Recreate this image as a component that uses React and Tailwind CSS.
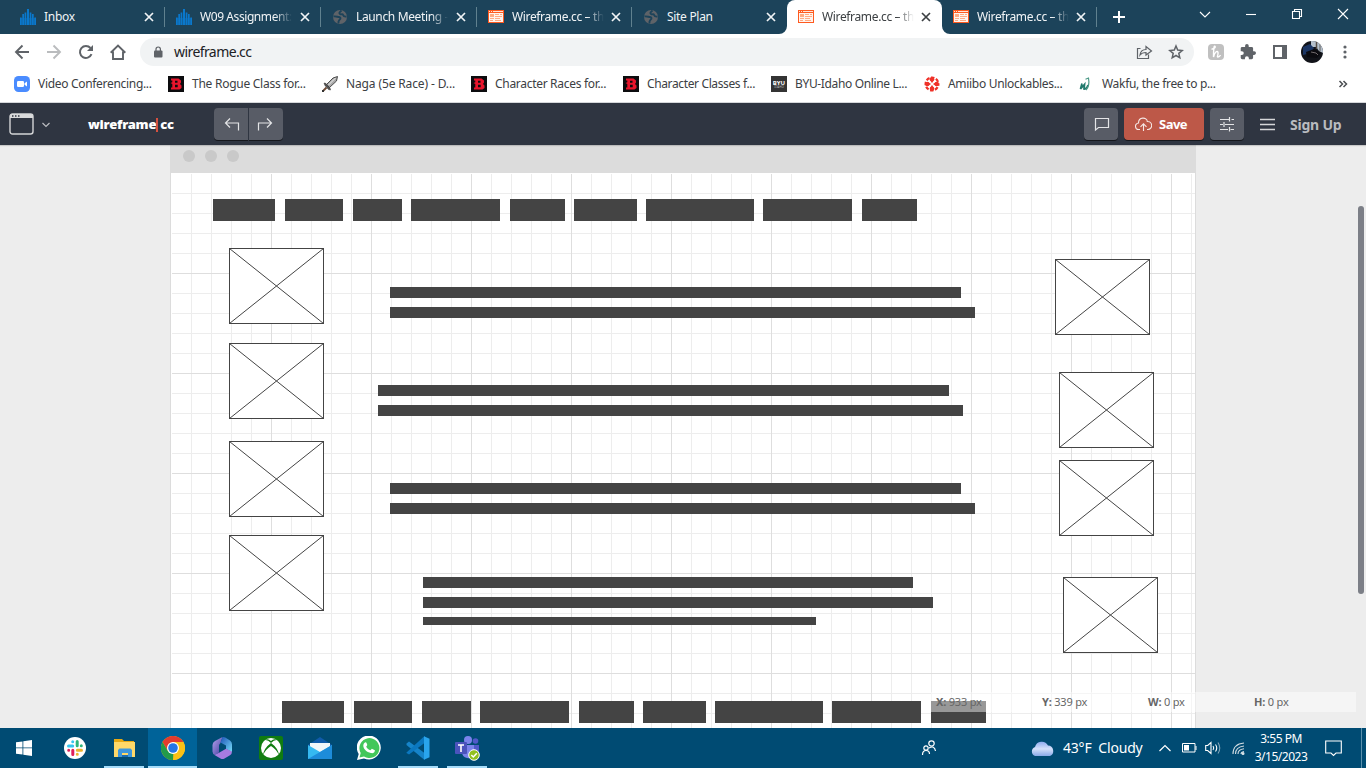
import React from 'react';

/* ---------- favicons ---------- */
const CanvasIcon = () => (
  <svg width="16" height="16" viewBox="0 0 16 16" fill="#0a78cc">
    <path d="M0 8.500h1.700V16H0zM2.300 5h1.700v11H2.300zM4.600 3.500h1.700V16H4.600zM7 0h2v16H7zM9.700 3.500h1.700V16H9.700zM12 5h1.700v11H12zM14.300 8.500H16V16h-1.700z" />
    <path d="M0 9h16v7H0z" opacity=".45" />
  </svg>
);
const GlobeIcon = () => (
  <svg width="16" height="16" viewBox="0 0 16 16">
    <circle cx="8" cy="8" r="7" fill="#5f6368" />
    <path d="M1.500 7.500C4 7 5.500 8 7 8s2 1.500.8 2.500C7 11.500 6 12 6.500 14.500M9.500 1.500C8 3 6.500 4 8 5s2.500-.5 3 .8 1 2.200 3.500 1.700" stroke="#1c435a" strokeWidth="1.900" fill="none" />
  </svg>
);
const WireIcon = () => (
  <svg width="16" height="16" viewBox="0 0 16 16" shapeRendering="crispEdges">
    <rect y="1" width="16" height="13" fill="#ff5a1f" />
    <rect x="1" y="4" width="14" height="9" fill="#fff4ee" />
    <path d="M1 2h1v1H1zM3 2h1v1H3zM5 2h10v1H5z" fill="#ffe5d8" />
    <path d="M2 5h4v3H2zM7 5h4v1H7zM12 5h2v1h-2zM7 7h7v1H7zM2 9h4v1H2zM7 9h5v1H7zM2 11h3v1H2zM7 11h6v1H7z" fill="#ffab84" />
  </svg>
);
const icons = { canvas: CanvasIcon, globe: GlobeIcon, wire: WireIcon };

const Cross = () => (
  <svg width="10" height="10" viewBox="0 0 10 10" stroke="currentColor" strokeWidth="1.700"><path d="M1 1l8 8M9 1L1 9" /></svg>
);

const Tab = ({ icon, title, active, width, sep, gradient, tracking, gap = 'ml-2' }) => {
  const Icon = icons[icon];
  return (
    <div className={`relative flex h-[34px] shrink-0 items-center pl-[11px] ${width} ${active ? 'rounded-t-lg bg-white text-[#3c4043]' : 'text-[#f1f4f6]'}`}>
      {active && (
        <>
          <svg className="absolute bottom-0 -left-2" width="8" height="8"><path d="M8 0v8H0a8 8 0 0 0 8-8" fill="white" /></svg>
          <svg className="absolute -right-2 bottom-0" width="8" height="8"><path d="M0 0v8h8a8 8 0 0 1-8-8" fill="white" /></svg>
        </>
      )}
      <Icon />
      <div className={`ml-2 w-[92px] overflow-hidden text-[12px] whitespace-nowrap ${tracking} ${gradient ? '[mask-image:linear-gradient(to_right,black_75px,transparent_92px)]' : ''}`}>{title}</div>
      <div className={gap}><Cross /></div>
      {sep && <div className="absolute top-[7px] right-0 h-5 w-px bg-[#60818f]" />}
    </div>
  );
};

const Tabs = () => (
  <div className="flex h-[34px] w-full bg-[#1c435a] pl-[9px]">
    <Tab icon="canvas" title="Inbox" width="w-[156px]" sep tracking="tracking-[-0.3px]" />
    <Tab icon="canvas" title="W09 Assignment:" width="w-[156px]" sep gradient tracking="tracking-[-0.42px]" />
    <Tab icon="globe" title="Launch Meeting -" width="w-[156px]" sep gradient tracking="tracking-[-0.36px]" />
    <Tab icon="wire" title="Wireframe.cc – th" width="w-[155px]" sep gradient tracking="tracking-[-0.35px]" gap="ml-[7px]" />
    <Tab icon="globe" title="Site Plan" width="w-[155px]" tracking="tracking-[-0.3px]" gap="ml-[7px]" />
    <Tab icon="wire" title="Wireframe.cc – th" width="w-[155px]" active gradient tracking="tracking-[-0.35px]" gap="ml-[7px]" />
    <Tab icon="wire" title="Wireframe.cc – th" width="w-[155px]" sep gradient tracking="tracking-[-0.35px]" gap="ml-[7px]" />
    <svg className="mt-[11px] ml-4" width="12" height="12" stroke="#fff" strokeWidth="2"><path d="M6 0v12M0 6h12" /></svg>
    <div className="ml-auto flex h-7 text-white">
      {[
        <path key="a" d="M3 6l5 5 5-5" />,
        <path key="b" d="M3 8.500h10" />,
        <path key="c" d="M3.500 5.500h7v7h-7zM5.500 5.500v-2h7v7h-2" />,
        <path key="d" d="M3 3l10 10M13 3L3 13" />,
      ].map((p, i) => (
        <div key={i} className="flex w-[46px] items-center justify-center">
          <svg width="16" height="16" fill="none" stroke="#fff" strokeWidth="1.100">{p}</svg>
        </div>
      ))}
    </div>
  </div>
);

const Toolbar = () => (
  <div className="flex h-9 items-center bg-white text-[#5f6368]">
    <svg className="ml-[14px]" width="16" height="16" fill="none" stroke="#5f6368" strokeWidth="1.900"><path d="M15 8H2M8.500 1.500L2 8l6.500 6.500" /></svg>
    <svg className="ml-4" width="16" height="16" fill="none" stroke="#babcbe" strokeWidth="1.900"><path d="M1 8h13M7.500 1.500L14 8l-6.500 6.500" /></svg>
    <svg className="ml-4" width="16" height="16" fill="none" stroke="#5f6368" strokeWidth="2"><path d="M13.500 10.200A6 6 0 1 1 12.500 4" /><path d="M15 1v6H9z" fill="#5f6368" stroke="none" /></svg>
    <svg className="ml-4" width="16" height="16" fill="none" stroke="#5f6368" strokeWidth="1.900"><path d="M.7 8.700L8 1.500l7.300 7.200M3 7.500V15h3.500v0h3.500H13V7.500" /></svg>
    <div className="ml-[14px] flex h-7 w-[1054px] items-center rounded-full bg-[#f1f3f4] pr-[10px] pl-[14px]">
      <svg width="9" height="12" viewBox="0 0 9 12"><rect y="4.500" width="8.500" height="7" rx="1" fill="#5f6368" /><path d="M2 5V3.200a2.200 2.200 0 0 1 4.400 0V5" fill="none" stroke="#5f6368" strokeWidth="1.200" /></svg>
      <span className="ml-[11px] pb-px text-[14px] tracking-[-0.58px] text-[#202124]">wireframe.cc</span>
      <svg className="mr-[15px] ml-auto" width="17" height="16" fill="none" stroke="#5f6368" strokeWidth="1.200"><path d="M4.500 4.500h-3v10h11v-4M4 11c.5-4 3-5.500 6-5.500V2.500L15.500 7 10 11V8.500C7.500 8.500 5.500 9 4 11z" /></svg>
      <svg width="16" height="16" viewBox="0 0 16 16" fill="none" stroke="#5f6368" strokeWidth="1.500"><path d="M8 2l1.700 4.100 4.500.4-3.400 2.900 1 4.400L8 11.500l-3.800 2.300 1-4.400L1.800 6.500l4.500-.4z" /></svg>
    </div>
    <div className="ml-[14px] flex h-4 w-4 items-center justify-center rounded-sm bg-[#c0c0c0]">
      <svg width="12" height="14" fill="none" stroke="#fff" strokeWidth="1.400"><path d="M1.500 4C4 4.500 6 2 5 1.200S3.500 4 3.500 12C4.500 7 7.500 5 8 7.500S6.500 12 8 12s2-1 2.500-2" /></svg>
    </div>
    <svg className="ml-4" width="16" height="16" viewBox="1 1 22 22" fill="#5f6368"><path d="M20.500 11H19V7a2 2 0 0 0-2-2h-4V3.500a2.500 2.500 0 0 0-5 0V5H4a2 2 0 0 0-2 2v3.800h1.500a2.700 2.700 0 0 1 0 5.400H2V20a2 2 0 0 0 2 2h3.800v-1.500a2.700 2.700 0 0 1 5.400 0V22H17a2 2 0 0 0 2-2v-4h1.500a2.500 2.500 0 0 0 0-5z" /></svg>
    <svg className="ml-[17px]" width="14" height="14" shapeRendering="crispEdges"><path d="M0 0h14v14H0zM2 2v10h7V2z" fill="#5f6368" fillRule="evenodd" /></svg>
    <svg className="ml-[14px]" width="22" height="22" viewBox="0 0 22 22">
      <defs><clipPath id="av"><circle cx="11" cy="11" r="11" /></clipPath></defs>
      <g clipPath="url(#av)">
        <rect width="22" height="22" fill="#111319" />
        <path d="M10 0h12v12l-4-2-3-4-5 0z" fill="#b5c0cc" /><path d="M15.500 0v8" stroke="#554c45" strokeWidth="1.500" /><path d="M19 1v9" stroke="#8b8f93" strokeWidth="2" />
        <path d="M2 6l7-3 4 4-3 5-8 2z" fill="#1b3563" /><path d="M5 11l8-3 7 4-4 5-10-1z" fill="#0b0b10" /><path d="M10 11l5 1 2 2" stroke="#706a6c" fill="none" />
      </g>
    </svg>
    <svg className="ml-[20px]" width="4" height="14" fill="#5f6368"><circle cx="2" cy="2" r="1.600" /><circle cx="2" cy="7" r="1.600" /><circle cx="2" cy="12" r="1.600" /></svg>
  </div>
);

/* ---------- bookmarks ---------- */
const ZoomIcon = () => <svg width="16" height="16"><rect width="16" height="16" rx="4.500" fill="#4a8cff" /><rect x="3" y="5" width="7" height="6" rx="1.200" fill="#fff" /><path d="M10.500 7.300L13 5.500v5l-2.500-1.800z" fill="#fff" /></svg>;
const BIcon = () => (
  <svg width="16" height="16"><rect width="16" height="16" fill="#0c0c0e" /><path d="M3 2.500h7.500L13 4.500v2L12 8l1.500 1.500V12l-2 1.500H3v-2h1.300V8L2.500 7l1.800-.8V4.500H3zM7 4.700v2h2.500v-2zM7 8.800v2.500h2.700V8.800z" fill="#e8152c" fillRule="evenodd" /></svg>
);
const SwordIcon = () => (
  <svg width="16" height="16"><path d="M15.500.5L14.500 5 7.500 11.500 4.500 8.500 11 2z" fill="#aaa" stroke="#3d3d3d" strokeWidth=".9" /><path d="M13.500 2L6 9.500" stroke="#eee" /><path d="M2 7l2 .5 4 4.500.5 2-2-.5L3 9.500z" fill="#555" stroke="#292929" strokeWidth=".5" /><path d="M4.500 11.500l-3 3" stroke="#704c38" strokeWidth="2" /><path d="M0 14h2v2H0z" fill="#333" /></svg>
);
const ByuIcon = () => (
  <div className="flex h-4 w-4 flex-col items-center justify-center bg-[#343434] leading-none text-white">
    <span className="text-[6px] leading-[6px] font-bold">BYU</span><span className="text-[3px] leading-[3px] text-[#bbb]">IDAHO</span>
  </div>
);
const IgnIcon = () => (
  <svg width="16" height="16" viewBox="0 0 16 16" fill="#ef3128">
    <circle cx="8" cy="8" r="6.400" fill="none" stroke="#ef3128" strokeWidth="2.200" strokeDasharray="3.400 1.627" strokeDashoffset="-3.300" />
    <circle cx="8" cy="3.300" r="2.300" /><circle cx="8" cy="12.700" r="2.300" /><circle cx="3.300" cy="8" r="2.300" /><circle cx="12.700" cy="8" r="2.300" />
    <path d="M6.500 4.500h3L8 7.200zM6.500 11.500h3L8 8.800zM4.500 6.500v3L7.200 8zM11.500 6.500v3L8.800 8z" />
  </svg>
);
const WakfuIcon = () => (
  <svg width="16" height="16" fill="none" stroke="#21796c"><path d="M4 7.500L2.500 13 6.500 8.500 6 13c2 .5 3.500-2 4-4" strokeWidth="1.800" /><path d="M7.500 3.200l3-1.200c.8 4.500.5 9-2.500 12" strokeWidth="1.200" stroke="#4e9a88" /></svg>
);
const bookmarks = [
  [ZoomIcon, 'Video Conferencing...', 'w-[154px]', 'tracking-[-0.31px]'],
  [BIcon, 'The Rogue Class for...', 'w-[154px]', 'tracking-[-0.26px]'],
  [SwordIcon, 'Naga (5e Race) - D...', 'w-[149px]', 'tracking-[-0.13px]'],
  [BIcon, 'Character Races for...', 'w-[152px]', 'tracking-[-0.3px]'],
  [BIcon, 'Character Classes f...', 'w-[148px]', 'tracking-[-0.37px]'],
  [ByuIcon, 'BYU-Idaho Online L...', 'w-[153px]', 'tracking-[-0.35px]'],
  [IgnIcon, 'Amiibo Unlockables...', 'w-[154px]', 'tracking-[-0.31px]'],
  [WakfuIcon, 'Wakfu, the free to p...', 'w-[154px]', 'tracking-[-0.31px]'],
];
const Bookmarks = () => (
  <div className="flex h-[33px] items-center border-b border-[#d5d7da] bg-white pr-[18px] pb-[4px] pl-[14px] text-[12px] text-[#3c4043]">
    {bookmarks.map(([Icon, label, w, tr]) => (
      <div key={label} className={`flex shrink-0 items-center gap-2 ${w}`}>
        <Icon /><span className={`whitespace-nowrap ${tr}`}>{label}</span>
      </div>
    ))}
    <svg className="ml-auto" width="10" height="8" fill="none" stroke="#4c4f53" strokeWidth="1.500"><path d="M1.500 1l3 3-3 3M5.500 1l3 3-3 3" /></svg>
  </div>
);

/* ---------- wireframe.cc header ---------- */
const btn = 'flex h-8 items-center justify-center bg-[#585c66] shadow-[0_1px_0_#15171c]';
const AppHeader = () => (
  <div className="relative z-10 flex h-[42px] items-center bg-[#2f3541] shadow-[0_1px_1px_rgba(0,0,0,0.15)]">
    <svg className="ml-[9px]" width="25" height="22" fill="none"><rect x="1" y="1" width="23" height="20" rx="2.500" stroke="#d4d5d6" strokeWidth="1.400" /><path d="M1 5V3a2 2 0 0 1 2-2h19a2 2 0 0 1 2 2v2z" fill="#d9dadb" /><path d="M3 3h1.500M6 3h1.500M9 3h1.500" stroke="#2f3541" strokeWidth="1.500" /></svg>
    <svg className="mt-[2px] ml-[8px]" width="8" height="6" fill="none" stroke="#bbbdc1" strokeWidth="1.200"><path d="M.5 1L4 4.500 7.500 1" /></svg>
    <div className="mt-px ml-[38px] flex w-[88px] items-center text-[13px] font-black tracking-[-0.23px] text-white">wireframe<span className="mr-[2px] h-[14px] w-[2px] bg-[#d4503f]" />cc</div>
    <div className="ml-[38px] flex gap-px">
      <div className={`${btn} w-[34px] rounded-l`}><svg className="ml-[2px]" width="16" height="16" fill="none" stroke="#e3e4e6" strokeWidth="1.200"><path d="M6 2.500L1.500 7 6 11.500M1.500 7h13v7.500" /></svg></div>
      <div className={`${btn} w-[34px] rounded-r`}><svg className="mr-[2px]" width="16" height="16" fill="none" stroke="#e3e4e6" strokeWidth="1.200"><path d="M10 2.500L14.500 7 10 11.500M14.500 7h-13v7.500" /></svg></div>
    </div>
    <div className="ml-auto flex items-center gap-1.5 pr-[24px]">
      <div className={`${btn} w-[34px] rounded`}><svg className="ml-[2px]" width="16" height="16" fill="none" stroke="#e3e4e6" strokeWidth="1.200"><path d="M1.500 2.500h13v9h-10l-3 2.500z" /></svg></div>
      <div className="flex h-8 w-20 items-center rounded bg-[#bd5848] pl-[11px] text-[13px] font-bold tracking-[-0.5px] text-white shadow-[0_1px_0_#15171c]">
        <svg className="mr-[7px]" width="17" height="14" fill="none" stroke="#f5e8e6" strokeWidth="1.100"><path d="M5 12.500H4A3.200 3.200 0 0 1 3.500 6C3.500-.5 12 0 12.300 4.500A4 4 0 0 1 13 12.500h-1M8.500 14V7M5.500 9.800l3-3 3 3" /></svg>
        <span className="mt-px">Save</span>
      </div>
      <div className={`${btn} w-[34px] rounded`}><svg width="16" height="16" fill="none" stroke="#e3e4e6" strokeWidth="1.200"><path d="M1 3.500h9M12.500 3.500H15M1 8.500h3M6 8.500h9M1 13.500h8M11.500 13.500H15M10.500 1v4.500M5 6v5M10.500 11v4.500" /></svg></div>
      <svg className="ml-[10px]" width="15" height="13" stroke="#d6d7d9" strokeWidth="1.300"><path d="M0 1.500h15M0 6.500h15M0 11.500h15" /></svg>
      <span className="ml-[9px] w-[52px] text-[14px] font-bold tracking-[-0.22px] whitespace-nowrap text-[#b9bbbf]">Sign Up</span>
    </div>
  </div>
);

/* ---------- drawing surface ---------- */
const Img = ({ x, y }) => (
  <svg className="absolute" style={{ left: x, top: y }} width="95" height="76"><rect x=".5" y=".5" width="94" height="75" fill="#fff" stroke="#444" /><path d="M.5.5l94 75M94.500.5l-94 75" stroke="#444" strokeWidth="1" /></svg>
);
const Bar = ({ x, y, w, h }) => <div className="absolute bg-[#444]" style={{ left: x, top: y, width: w, height: h }} />;
const navItems = [[0, 62], [72, 58], [140, 49], [198, 89], [297, 55], [361, 63], [433, 108], [550, 89], [649, 55]];
const lines = [
  [219, 114, 571, 11], [219, 134, 585, 11], [207, 212, 571, 11], [207, 232, 585, 11],
  [219, 310, 571, 11], [219, 330, 585, 11], [252, 404, 490, 11], [252, 424, 510, 11], [252, 444, 393, 8],
];
const images = [[58, 75], [58, 170], [58, 268], [58, 362], [884, 86], [888, 199], [888, 287], [892, 404]];
const stats = [['X:', '933 px'], ['Y:', '339 px'], ['W:', '0 px'], ['H:', '0 px']];

const Workspace = () => (
  <div className="relative h-[583px] overflow-hidden bg-[#ededed]">
    <div className="ml-[170px] w-[1026px]">
      <div className="flex h-7 gap-[10px] bg-[#dcdcdc] pt-[5px] pl-[13px]">
        {[0, 1, 2].map((i) => <div key={i} className="h-3 w-3 rounded-full bg-[#c9c9c9]" />)}
      </div>
      <div className="relative h-[555px] border-x border-[#dcdcdc] bg-white">
        <svg className="absolute inset-0" width="1024" height="555" shapeRendering="crispEdges">
          <defs>
            <pattern id="minor" width="20" height="20" patternUnits="userSpaceOnUse"><path d="M0 0h20v1H1v19H0z" fill="#ededed" /></pattern>
            <pattern id="major" width="100" height="100" patternUnits="userSpaceOnUse"><path d="M0 0h100v1H1v99H0z" fill="#dedede" /></pattern>
          </defs>
          <rect width="1024" height="555" fill="url(#minor)" />
          <rect width="1024" height="555" fill="url(#major)" />
          <path d="M0 0h1024v1H1v554H0z" fill="#fff" />
        </svg>
        {navItems.map(([x, w]) => <Bar key={`t${x}`} x={42 + x} y={26} w={w} h={22} />)}
        {lines.map(([x, y, w, h]) => <Bar key={y} x={x} y={y} w={w} h={h} />)}
        {images.map(([x, y]) => <Img key={`${x}-${y}`} x={x} y={y} />)}
        {navItems.map(([x, w]) => <Bar key={`b${x}`} x={111 + x} y={528} w={w} h={22} />)}
      </div>
    </div>
    <div className="absolute top-[547px] left-[931px] flex h-5 w-[425px] items-center bg-white/45 pl-[5px] text-[11px] tracking-[-0.2px] text-[#666]">
      {stats.map(([k, v]) => <div key={k} className="w-[106px] shrink-0 whitespace-nowrap"><b>{k}</b> {v}</div>)}
    </div>
    <div className="absolute top-[61px] right-[2px] h-[388px] w-[6px] rounded-full bg-[#7c7f87]" />
  </div>
);

/* ---------- taskbar ---------- */
const apps = [
  <svg key="slack" width="24" height="24"><circle cx="12" cy="12" r="11" fill="#fff" /><g strokeWidth="3" strokeLinecap="round"><path d="M9.700 5.800v0M5.500 10h4.200" stroke="#36c5f0" /><path d="M14.200 5.500v4.200M18.300 9.800v0" stroke="#2eb67d" /><path d="M14.300 14.200h4.200M14.300 18.300v0" stroke="#ecb22e" /><path d="M9.800 14.300v4.200M5.700 14.300v0" stroke="#e01e5a" /></g></svg>,
  <svg key="files" width="24" height="24"><path d="M2 3h8l2 2h10v16H2z" fill="#e8a914" /><path d="M2 6h21v15H2z" fill="#ffd869" /><path d="M6 14l1.500-1.500h11L20 14v7h-4v-4h-6v4H6z" fill="#3f97dc" /><path d="M10 19h6v2h-6z" fill="#1d6cae" /></svg>,
  <svg key="chrome" width="24" height="24"><circle cx="12" cy="12" r="12" fill="#fbc116" /><path d="M1.600 6a12 12 0 0 1 20.800 0H12l-5.200 9z" fill="#e33b2e" /><path d="M1.600 6l5.200 9 5.500 3-.3 6A12 12 0 0 1 1.600 6z" fill="#229a49" /><path d="M22.400 6H12l5.200 9L12 24A12 12 0 0 0 22.400 6z" fill="#fbc116" /><circle cx="12" cy="12" r="6" fill="#fff" /><circle cx="12" cy="12" r="4.800" fill="#2476e5" /></svg>,
  <svg key="m365" width="24" height="24" viewBox="0 0 24 24"><defs><linearGradient id="ma" x2="1" y2="1"><stop stopColor="#b7a2ef" /><stop offset="1" stopColor="#403d9e" /></linearGradient><linearGradient id="mb" x2="1" y2="1"><stop stopColor="#1c52b7" /><stop offset="1" stopColor="#78dcf8" /></linearGradient></defs><path d="M12.500 1L5 5Q2.500 6.500 2.500 9v6.500q0 2.500 2.500 3.500l4-2.500V9.500Q9 8 10.500 7z" fill="url(#ma)" /><path d="M12.500 1q1.500-.4 2.800.5L20 4.500q2 1.500 2 4V16l-6-3V9.500l-5.500-3z" fill="url(#mb)" /><path d="M4.500 19l5-2.500 6.500-3.700 6 2.700q0 2.500-2 3.700l-5.500 3.300q-2 1-4 0z" fill="#a77be0" /></svg>,
  <svg key="xbox" width="24" height="24"><rect width="24" height="24" rx="2" fill="#107c10" /><circle cx="12" cy="12" r="10" fill="#fff" /><path d="M6 4q3-2 6 1 3-3 6-1-3-.3-6 3Q9 3.700 6 4zM4 19q1-7 8-12 7 5 8 12-3-6-8-9-5 3-8 9z" fill="#107c10" /></svg>,
  <svg key="mail" width="24" height="24"><path d="M0 9l12-8 12 8v3H0z" fill="#105baa" /><path d="M2 7h20v9H2z" fill="#f2f6f9" /><path d="M0 9l12 7L24 9v14H0z" fill="#35b9f1" /><path d="M0 23l24-14v14z" fill="#1d8cda" /></svg>,
  <svg key="wa" width="24" height="24"><path d="M0 24l1.700-6A12 12 0 1 1 7 22.500z" fill="#fff" /><path d="M2.500 21.500L3.700 17A10 10 0 1 1 7 20.500z" fill="#42c75a" /><path d="M8 6.500c1-.5 1.500 0 2.300 2.500L9.200 10.700c1 2 2.500 3 4.200 3.500l1.500-1.500 3 1.500c0 2.500-2 3.300-4 2.800C9.500 16 6.500 13 6.300 10c0-2 .7-3 1.700-3.500z" fill="#fff" /></svg>,
  <svg key="vs" width="24" height="24"><path d="M.5 7.500L3 5.500 18.500 17v7L.5 9z" fill="#1684c9" /><path d="M.5 16.500L18.500 0v7L3 18.500.5 17z" fill="#0b78c0" /><path d="M18 .2l5.500 2.500v18.500L18 23.800z" fill="#29a5ed" /></svg>,
  <svg key="teams" width="26" height="26"><circle cx="14" cy="5" r="4" fill="#7b83eb" /><circle cx="21.500" cy="6" r="2.800" fill="#5059c9" /><path d="M18 10h7v7q-1 4-5 4z" fill="#5059c9" /><path d="M8 10h12v9q-2 5-7 4-5-1-5-6z" fill="#7b83eb" /><rect x="1" y="7" width="12" height="12" rx="1" fill="#4b53bc" /><path d="M4 10h6M7 10v7" stroke="#fff" strokeWidth="1.600" /><circle cx="20" cy="20" r="5.300" fill="#92c020" stroke="#fff" strokeWidth="1" /><path d="M17.300 20l2 2 3.500-3.700" fill="none" stroke="#fff" strokeWidth="1.500" /></svg>,
];
const Taskbar = () => (
  <div className="flex h-10 items-center bg-[#004b73] text-white">
    <div className="flex w-[50px] justify-center pr-[2px]"><svg width="16" height="16" fill="#fff"><path d="M0 2.300L6.500 1.400v6.100H0zM7.300 1.300L16 0v7.500H7.300zM0 8.300h6.500v6.300L0 13.700zM7.300 8.300H16V16l-8.700-1.300z" /></svg></div>
    {apps.map((a, i) => (
      <div key={a.key} className={`relative flex h-10 w-[49px] items-center justify-center ${i === 2 ? 'bg-[#006399]' : ''}`}>
        {a}
        {[1, 2, 7, 8].includes(i) && <div className={`absolute bottom-0 h-[2px] bg-[#a5dcfa] ${i === 2 ? 'w-[49px]' : 'w-10'}`} />}
      </div>
    ))}
    <svg className="ml-[430px] shrink-0" width="16" height="16" fill="none" stroke="#fff" strokeWidth="1.200"><circle cx="5" cy="8" r="2.200" /><path d="M1.500 15q0-4.500 3.500-4.500t3.500 3.500" /><circle cx="10.500" cy="3.500" r="2.700" /><path d="M8 8q5.500-3 6.500 3" /></svg>
    <svg className="ml-[93px] shrink-0" width="25" height="17"><defs><linearGradient id="cl" x2="0" y2="1"><stop stopColor="#8facf0" /><stop offset=".5" stopColor="#d5e1fb" /><stop offset="1" stopColor="#8aaae8" /></linearGradient></defs><path d="M5 16a4.800 4.800 0 0 1 0-9A7 7 0 0 1 18 5.500a5.500 5.500 0 0 1 2 10.500z" fill="url(#cl)" /></svg>
    <span className="ml-[8px] w-[80px] shrink-0 pb-px text-[14px] tracking-[-0.2px] whitespace-pre">43°F  Cloudy</span>
    <svg className="ml-[16px] shrink-0" width="12" height="8" fill="none" stroke="#fff" strokeWidth="1.200"><path d="M.5 7L6 1.500 11.500 7" /></svg>
    <svg className="ml-[11px] shrink-0" width="15" height="10"><path d="M.5.5h12.500v8.500H.5zM14 3v4" fill="none" stroke="#fff" /><path d="M2 2h5v5.500H2z" fill="#fff" /></svg>
    <svg className="ml-[8px] shrink-0" width="17" height="14" fill="none" stroke="#fff" strokeWidth="1.100"><path d="M.7 4.500h2L6 1.500v11l-3.300-3h-2zM8 5q1.500 2 0 4M10.500 3.500q2.500 3.500 0 7" /><path d="M13 1.500q3.500 5.500 0 11" opacity=".5" /></svg>
    <svg className="ml-[10px] shrink-0" width="13" height="13" fill="none" stroke="#d1dde3" strokeWidth="1.100"><path d="M1 12Q1 2 12 1M3.500 12q0-7 8.500-8M6 12q0-4.500 6-5.200M9 12q0-2 3-2.500" /><circle cx="11" cy="11.500" r="1" fill="#fff" /></svg>
    <div className="ml-[9px] w-[54px] shrink-0 text-center text-[12px] leading-[18px] tracking-[-0.48px] whitespace-nowrap">3:55 PM<br />3/15/2023</div>
    <svg className="ml-[17px] shrink-0" width="17" height="17" fill="none" stroke="#fff" strokeWidth="1.100"><path d="M.7 1h15.600v12H11l-2.500 2.500L6 13H.7z" /></svg>
    <div className="mr-1 ml-auto h-10 w-px bg-[#5b91ad]" />
  </div>
);

export default function App() {
  return (
    <div className="h-[768px] w-[1366px] overflow-hidden font-['Noto_Sans','Open_Sans',sans-serif]">
      <Tabs />
      <Toolbar />
      <Bookmarks />
      <AppHeader />
      <Workspace />
      <Taskbar />
    </div>
  );
}
